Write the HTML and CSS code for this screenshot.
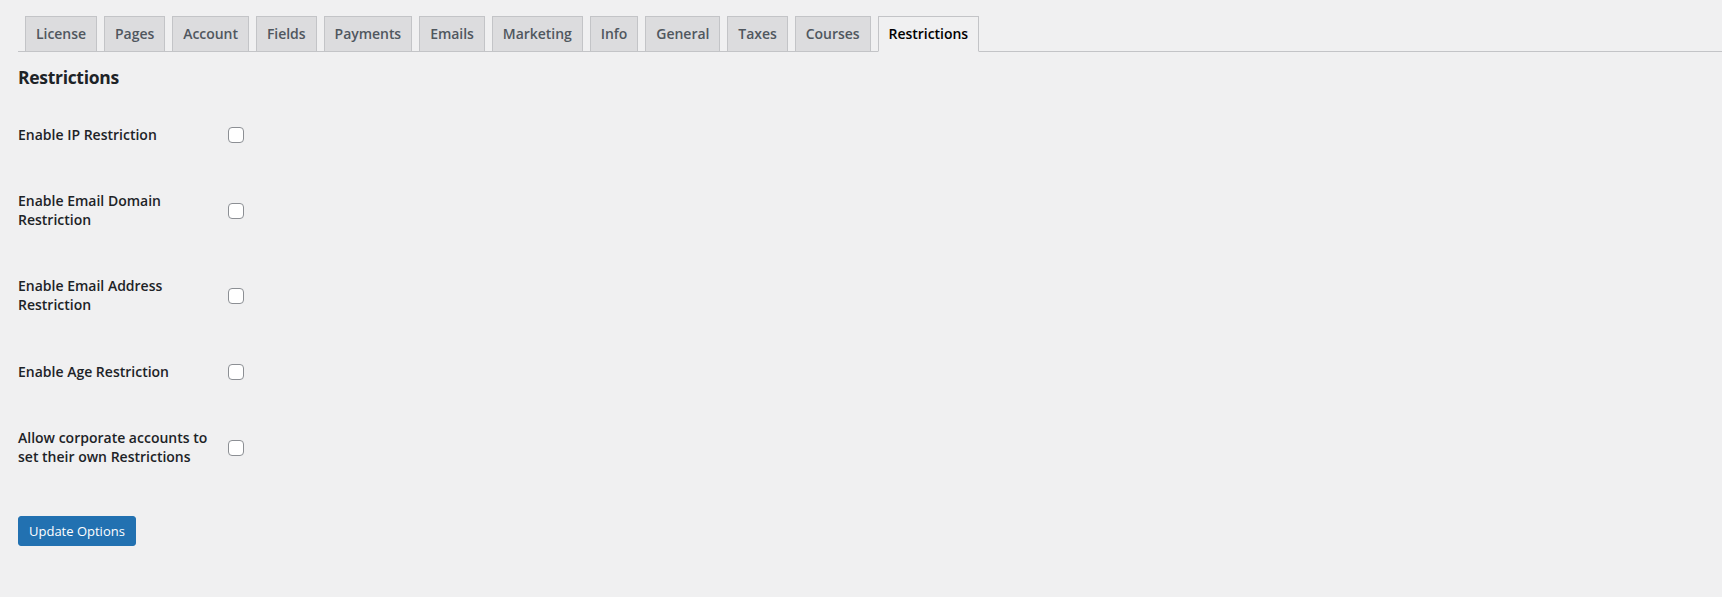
FILE: index.html
```html
<!DOCTYPE html>
<html lang="en">
<head>
<meta charset="utf-8">
<title>Restrictions</title>
<link rel="stylesheet" href="styles.css">
</head>
<body>
<div class="wrap">
  <nav class="tabs">
    <a class="tab">License</a>
    <a class="tab">Pages</a>
    <a class="tab">Account</a>
    <a class="tab">Fields</a>
    <a class="tab">Payments</a>
    <a class="tab">Emails</a>
    <a class="tab">Marketing</a>
    <a class="tab">Info</a>
    <a class="tab">General</a>
    <a class="tab">Taxes</a>
    <a class="tab">Courses</a>
    <a class="tab active">Restrictions</a>
  </nav>
  <h2 class="title">Restrictions</h2>
  <form class="form">
    <div class="row">
      <label class="row-label">Enable IP Restriction</label>
      <input class="check" type="checkbox">
    </div>
    <div class="row">
      <label class="row-label">Enable Email Domain<br>Restriction</label>
      <input class="check" type="checkbox">
    </div>
    <div class="row row-spaced">
      <label class="row-label">Enable Email Address<br>Restriction</label>
      <input class="check" type="checkbox">
    </div>
    <div class="row">
      <label class="row-label">Enable Age Restriction</label>
      <input class="check" type="checkbox">
    </div>
    <div class="row">
      <label class="row-label">Allow corporate accounts to<br>set their own Restrictions</label>
      <input class="check" type="checkbox">
    </div>
    <button class="button" type="button">Update Options</button>
  </form>
</div>
</body>
</html>
```
FILE: styles.css
```css
html, body {
  margin: 0;
  padding: 0;
  background: #f0f0f1;
}
body {
  font-family: "Open Sans", "Noto Sans", sans-serif;
  color: #1d2327;
  font-size: 14px;
}
.wrap {
  padding: 16px 0 0 18px;
}
.tabs {
  display: flex;
  align-items: flex-end;
  border-bottom: 1px solid #c3c4c7;
}
.tab {
  margin-left: 7px;
  padding: 5px 10px;
  border: 1px solid #c3c4c7;
  border-bottom: none;
  background: #dcdcde;
  color: #50575e;
  font-size: 14px;
  font-weight: 600;
  line-height: 24px;
  white-space: nowrap;
  letter-spacing: -0.04px;
}
.tab.active {
  background: #f0f0f1;
  color: #000;
  border-bottom: 1px solid #f0f0f1;
  margin-bottom: -1px;
}
.title {
  margin: 13px 0 0;
  font-size: 17.5px;
  line-height: 24px;
  font-weight: 700;
  letter-spacing: -0.3px;
  color: #1d2327;
}
.form {
  margin-top: 8px;
  display: flex;
  flex-direction: column;
  align-items: flex-start;
}
.row {
  display: flex;
  align-items: center;
  height: 76px;
}
.row-spaced {
  margin-top: 9px;
}
.row-label {
  width: 210px;
  padding-bottom: 2px;
  font-size: 14px;
  font-weight: 600;
  line-height: 19px;
  color: #1d2327;
}
.check {
  appearance: none;
  -webkit-appearance: none;
  margin: 0;
  width: 16px;
  height: 16px;
  box-sizing: border-box;
  border: 1px solid #8c8f94;
  border-radius: 4px;
  background: #fff;
}
.button {
  margin-top: 30px;
  height: 30px;
  padding: 0 10px;
  border: 1px solid #2271b1;
  border-radius: 3px;
  background: #2271b1;
  color: #fff;
  font-family: "Open Sans", "Noto Sans", sans-serif;
  font-size: 13px;
  line-height: 28px;
}
```
